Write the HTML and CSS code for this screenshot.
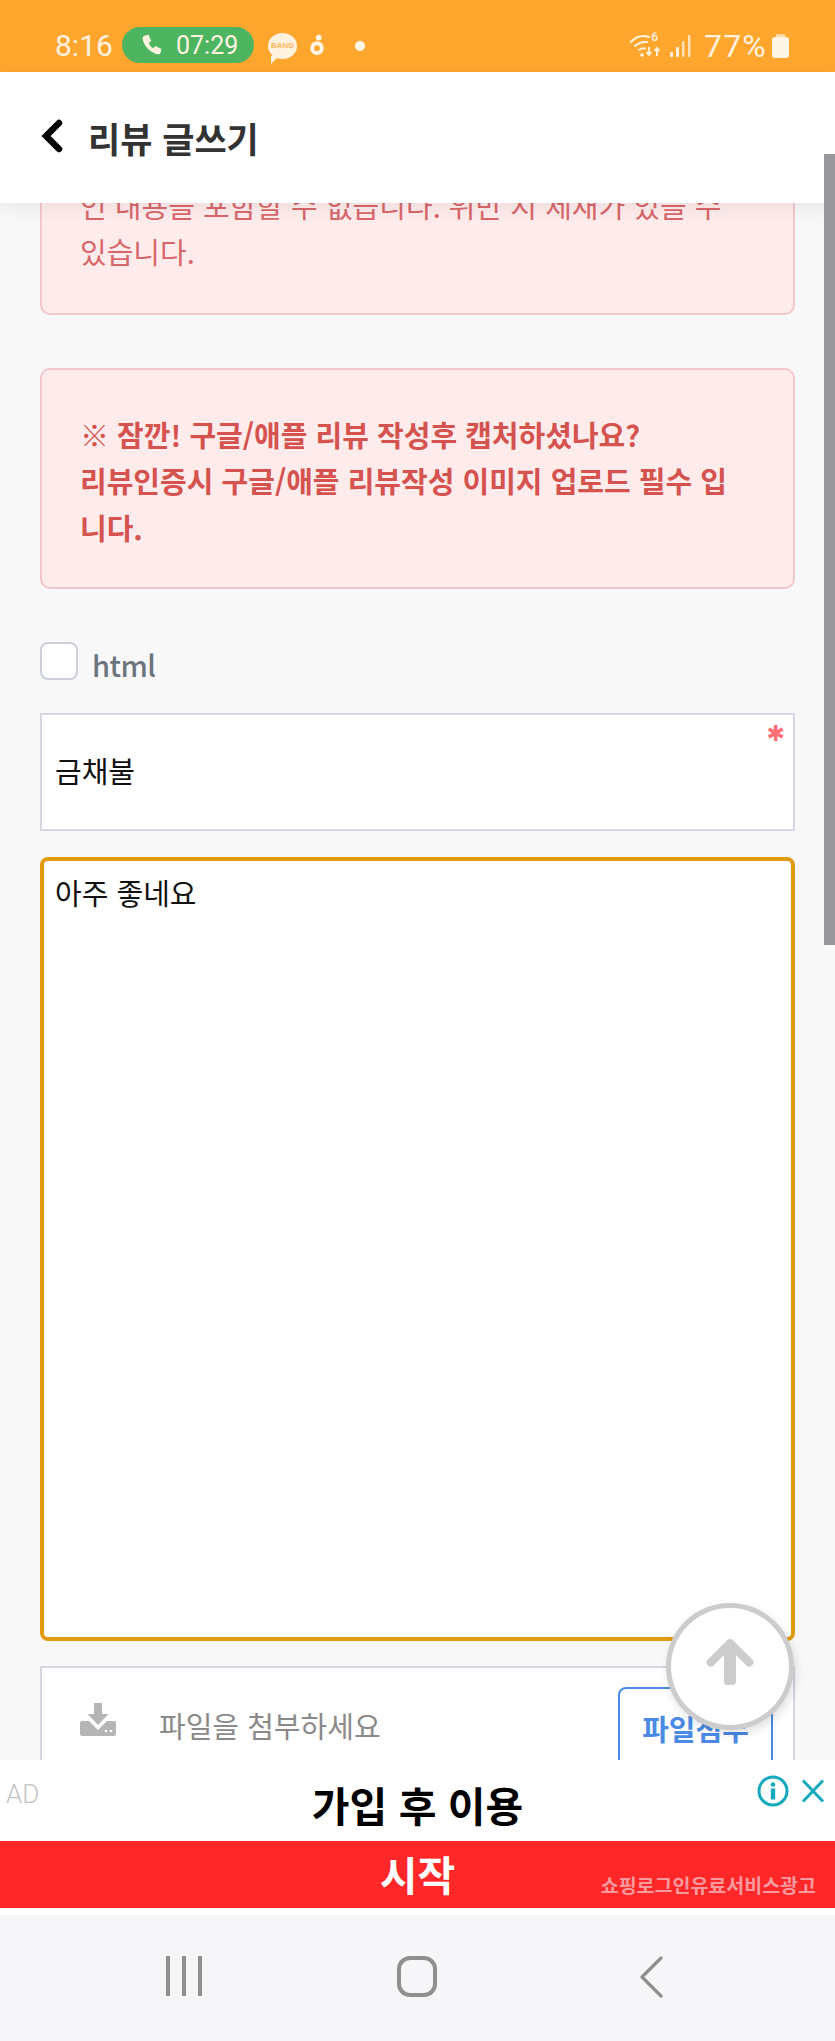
FILE: index.html
```html
<!DOCTYPE html>
<html lang="ko">
<head>
<meta charset="utf-8">
<title>리뷰 글쓰기</title>
<link rel="stylesheet" href="styles.css">
</head>
<body>
<div class="screen">
  <div class="status">
    <span class="clock">8:16</span>
    <span class="call">
      <svg class="call-icon" viewBox="0 0 24 24"><path d="M5 2.500 8.600 1.800 11.200 8l-2.500 2c.9 2.300 2.300 3.900 4.600 5.200l2.200-2.300 6 3-.9 3.600c-.4 1.400-1.600 2.100-3 1.800C10 19.600 3.900 13 2.600 5.800 2.400 4.200 3.400 3 5 2.500Z"/></svg>
      <span class="call-time">07:29</span>
    </span>
    <span class="band"><span class="band-text">BAND</span></span>
    <svg class="ring" viewBox="0 0 16 26"><circle cx="10" cy="4" r="3.200"/><circle cx="8" cy="16" r="5.500" fill="none" stroke="#fff7ea" stroke-width="4.500"/></svg>
    <span class="dot"></span>
    <span class="status-right">
      <span class="wifi">
        <svg viewBox="0 0 31 25"><g fill="none" stroke="#fff3e0" stroke-width="2" stroke-linecap="round"><path d="M1 9C6 3.500 13 2 19 4"/><path d="M5 13C9 9.500 13 8.500 17 9"/><path d="M9 17c2-1.500 4-2 6-1.500"/></g><circle cx="12" cy="22" r="1.800" fill="#fff3e0"/><path d="M19 14v8m-2.500-3 2.500 3 2.500-3M27 23v-8m-2.500 3 2.500-3 2.500 3" fill="none" stroke="#fff3e0" stroke-width="1.800"/></svg>
        <span class="wifi-six">6</span>
      </span>
      <svg class="signal" viewBox="0 0 21 22"><g fill="#fff3e0"><rect x="0" y="17" width="3" height="5" rx="1"/><rect x="6" y="12" width="3" height="10" rx="1"/><rect x="12" y="6" width="2.400" height="16" rx="1" opacity=".8"/><rect x="18" y="0" width="2.400" height="22" rx="1" opacity=".8"/></g></svg>
      <span class="battery-text">77%</span>
      <span class="battery"></span>
    </span>
  </div>

  <header class="topbar">
    <svg class="back" viewBox="0 0 22 34"><path d="M18 4 5 17l13 13" fill="none" stroke="#000" stroke-width="6.500" stroke-linecap="round" stroke-linejoin="miter"/></svg>
    <h1 class="title">리뷰 글쓰기</h1>
  </header>

  <main class="content">
    <div class="notice notice-soft">인 내용을 포함할 수 없습니다. 위반 시 제재가 있을 수 있습니다.</div>
    <div class="notice notice-strong">※ 잠깐! 구글/애플 리뷰 작성후 캡처하셨나요?<br>리뷰인증시 구글/애플 리뷰작성 이미지 업로드 필수 입니다.</div>
    <label class="check-row"><span class="check"></span><span class="check-label">html</span></label>
    <div class="field">
      <span class="field-text">금채불</span>
      <span class="required">✱</span>
    </div>
    <div class="editor">아주 좋네요</div>
    <div class="attach">
      <svg class="attach-icon" viewBox="0 0 36 33"><path d="M14 0h8v11h6.500L18 22 7.500 11H14Z" fill="#b5b5b5"/><path d="M2 18h7l9 9 9-9h7c1 0 2 1 2 2v11c0 1-1 2-2 2H2c-1 0-2-1-2-2V20c0-1 1-2 2-2Z" fill="#b5b5b5"/><circle cx="26" cy="28" r="1.300" fill="#fff"/><circle cx="31" cy="28" r="1.300" fill="#fff"/></svg>
      <span class="attach-text">파일을 첨부하세요</span>
      <span class="attach-btn">파일첨부</span>
    </div>
  </main>

  <div class="ad">
    <div class="ad-top">
      <span class="ad-mark">AD</span>
      <span class="ad-title">가입 후 이용</span>
      <span class="ad-icons">
        <svg class="ad-info" viewBox="0 0 32 32"><circle cx="16" cy="16" r="14" fill="none" stroke="#17a9bd" stroke-width="3"/><circle cx="16" cy="9.500" r="2.300" fill="#17a9bd"/><rect x="13.800" y="13.500" width="4.400" height="11" fill="#17a9bd"/></svg>
        <svg class="ad-close" viewBox="0 0 24 24"><path d="M2 1.500 22 22.500M22 1.500 2 22.500" fill="none" stroke="#17a9bd" stroke-width="3"/></svg>
      </span>
    </div>
    <div class="ad-cta">
      <span class="ad-start">시작</span>
      <span class="ad-note">쇼핑로그인유료서비스광고</span>
    </div>
  </div>

  <nav class="sysnav">
    <svg class="nav-recent" viewBox="0 0 40 40"><path d="M2 1v38M18 1v38M34 1v38" fill="none" stroke="#8f8f8f" stroke-width="4" stroke-linecap="round"/></svg>
    <span class="nav-home"></span>
    <svg class="nav-back" viewBox="0 0 24 42"><path d="M22 2 3 21l19 19" fill="none" stroke="#8f8f8f" stroke-width="3.200" stroke-linecap="round" stroke-linejoin="round"/></svg>
  </nav>

  <div class="scrollbar"></div>
  <button class="to-top" type="button" aria-label="위로">
    <svg viewBox="0 0 48 46"><path d="M24 0c1 0 2 .4 2.800 1.200l19.700 19.600c1.400 1.400 1.400 3.500 0 4.900l-1 1c-1.400 1.400-3.500 1.400-4.900 0L30 16v27c0 1.700-1.300 3-3 3h-6c-1.700 0-3-1.300-3-3V16L7.400 26.700c-1.400 1.400-3.500 1.400-4.900 0l-1-1c-1.400-1.400-1.400-3.500 0-4.900L21.200 1.200C22 .4 23 0 24 0Z" fill="#cccccc"/></svg>
  </button>
</div>
</body>
</html>
```

FILE: styles.css
```css
* { box-sizing: border-box; }
html, body { margin: 0; padding: 0; }
body { font-family: "Noto Sans CJK KR", "Noto Sans", sans-serif; background: #f8f8f9; }

.screen {
  position: relative;
  width: 835px;
  height: 2041px;
  display: flex;
  flex-direction: column;
  overflow: hidden;
  background: #f8f8f9;
}

/* status bar */
.status {
  height: 72px;
  flex: none;
  background: #ffa62e;
  display: flex;
  align-items: center;
  padding: 19px 46px 0 55px;
  color: #fff3e0;
  font-family: Roboto, sans-serif;
}
.clock { font-size: 30px; font-weight: 400; width: 67px; }
.call {
  width: 132px;
  height: 36px;
  margin-top: -1px;
  background: #4db560;
  border-radius: 18px;
  display: flex;
  align-items: center;
  padding-left: 18px;
}
.call-icon { width: 24px; height: 24px; fill: #fff3e0; }
.call-time { font-size: 25px; font-weight: 400; margin-left: 12px; }
.band {
  position: relative;
  width: 29px;
  height: 26px;
  margin-left: 14px;
  background: #fff3e0;
  border-radius: 50%;
  display: flex;
  align-items: center;
  justify-content: center;
}
.band::after {
  content: "";
  position: absolute;
  left: 3px;
  bottom: -5px;
  border-top: 8px solid #fff3e0;
  border-right: 8px solid transparent;
}
.band-text { font-size: 8px; font-weight: 700; color: #ffb45a; font-family: "Liberation Sans", sans-serif; }
.ring { width: 14px; height: 25px; margin-left: 13px; fill: #fff7ea; }
.dot { width: 10px; height: 10px; margin-left: 31px; border-radius: 50%; background: #fff7ea; }
.status-right { margin-left: auto; display: flex; align-items: center; }
.wifi { position: relative; width: 31px; height: 25px; display: block; }
.wifi svg { display: block; width: 31px; height: 25px; }
.wifi-six { position: absolute; right: 3px; top: -3px; font-size: 12px; font-weight: 500; }
.signal { width: 21px; height: 22px; margin-left: 9px; }
.battery-text { font-size: 32px; font-weight: 400; margin-left: 13px; line-height: 30px; letter-spacing: 1.200px; }
.battery {
  position: relative;
  width: 17px;
  height: 21px;
  margin: 3px 0 0 5px;
  background: #fff6e8;
  border-radius: 3px;
}
.battery::before {
  content: "";
  position: absolute;
  left: 4px;
  top: -3px;
  width: 9px;
  height: 3px;
  background: #ffd9a3;
  border-radius: 1px 1px 0 0;
}

/* header */
.topbar {
  position: relative;
  z-index: 2;
  height: 131px;
  flex: none;
  background: #fff;
  display: flex;
  align-items: center;
  padding-left: 41px;
  box-shadow: 0 4px 18px rgba(0, 0, 0, .07);
}
.back { width: 22px; height: 34px; margin-top: -3px; }
.title { margin: 0 0 0 25px; font-size: 35px; font-weight: 700; color: #333; line-height: 1; }

/* content */
.content {
  flex: none;
  height: 1557px;
  overflow: hidden;
  padding: 0 40px;
  background: #f8f8f9;
}
.notice {
  background: #feecec;
  border: 2px solid #f3c6cc;
  border-radius: 10px;
  font-size: 29px;
  line-height: 46.400px;
}
.notice-soft { margin-top: -21px; padding: 0 38px 38px; border-top: 0; color: #d9666a; font-weight: 400; }
.notice-strong { margin-top: 53px; padding: 41px 52px 37px 38px; color: #d6524f; font-weight: 700; }
.check-row { display: flex; align-items: center; margin-top: 53px; height: 38px; }
.check {
  width: 38px;
  height: 38px;
  background: #fff;
  border: 2px solid #ccd0da;
  border-radius: 8px;
}
.check-label { margin-left: 14px; font-size: 29px; font-weight: 500; color: #6c757d; line-height: 1; padding-top: 6px; letter-spacing: -.5px; }
.field {
  position: relative;
  margin-top: 33px;
  height: 118px;
  background: #fff;
  border: 2px solid #d4d6e0;
  padding-left: 13px;
  display: flex;
  align-items: center;
  font-size: 29px;
  color: #111;
}
.field-text { padding-bottom: 4px; }
.required {
  position: absolute;
  right: 8px;
  top: 6px;
  font-family: "DejaVu Sans", sans-serif;
  font-size: 22px;
  line-height: 1.200;
  color: #ff6f76;
}
.editor {
  margin-top: 26px;
  height: 784px;
  background: #fff;
  border: 4px solid #e09c0e;
  border-radius: 8px;
  padding: 11px 11px;
  font-size: 29px;
  line-height: 1.400;
  color: #111;
}
.attach {
  margin-top: 25px;
  height: 140px;
  background: #fff;
  border: 2px solid #d4d6e0;
  border-bottom: 0;
  display: flex;
  align-items: flex-start;
  padding-top: 19px;
}
.attach-icon { width: 36px; height: 33px; margin: 16px 0 0 38px; flex: none; }
.attach-text { margin: 16px 0 0 43px; font-size: 29px; color: #8a8a8a; line-height: 44px; }
.attach-btn {
  margin-left: auto;
  margin-right: 20px;
  width: 155px;
  height: 100px;
  flex: none;
  border: 2px solid #4a8ae6;
  border-radius: 8px;
  text-align: center;
  font-size: 29px;
  font-weight: 700;
  color: #4a8ae6;
  line-height: 78px;
}

/* ad */
.ad { position: relative; z-index: 2; height: 155px; flex: none; background: #fff; }
.ad-top { position: relative; height: 81px; display: flex; justify-content: center; align-items: center; }
.ad-mark { position: absolute; left: 6px; top: 19px; font-family: Roboto, sans-serif; font-weight: 300; font-size: 26px; color: #c4c4c4; }
.ad-title { font-size: 41px; font-weight: 700; color: #000; line-height: 1; padding-top: 8px; }
.ad-icons { position: absolute; right: 10px; top: 15px; display: flex; align-items: center; gap: 12px; }
.ad-info { width: 32px; height: 32px; display: block; }
.ad-close { width: 24px; height: 24px; display: block; }
.ad-cta {
  position: relative;
  height: 67px;
  background: #ff2727;
  display: flex;
  justify-content: center;
  align-items: center;
}
.ad-start { font-size: 41px; font-weight: 700; color: #fff; line-height: 1; padding-bottom: 2px; }
.ad-note { position: absolute; right: 19px; bottom: 11px; font-size: 19.500px; font-weight: 700; line-height: 1.300; color: #f59a9e; }

/* system nav */
.sysnav { position: relative; flex: none; height: 126px; background: #f6f6f8; }
.nav-recent { position: absolute; left: 166px; top: 41px; width: 40px; height: 40px; }
.nav-home {
  position: absolute;
  left: 397px;
  top: 41px;
  width: 40px;
  height: 41px;
  border: 4px solid #8f8f8f;
  border-radius: 13px;
}
.nav-back { position: absolute; left: 639px; top: 41px; width: 24px; height: 42px; }

/* overlays */
.scrollbar { position: absolute; z-index: 3; right: 0; top: 154px; width: 11px; height: 791px; background: #98989c; }
.to-top {
  position: absolute;
  z-index: 4;
  left: 666px;
  top: 1603px;
  width: 128px;
  height: 127px;
  padding: 0;
  border: 5px solid #cccccc;
  border-radius: 50%;
  background: #fff;
  box-shadow: 2px 4px 10px rgba(0, 0, 0, .12);
  display: flex;
  align-items: center;
  justify-content: center;
}
.to-top svg { width: 48px; height: 46px; margin-top: -10px; }
```
